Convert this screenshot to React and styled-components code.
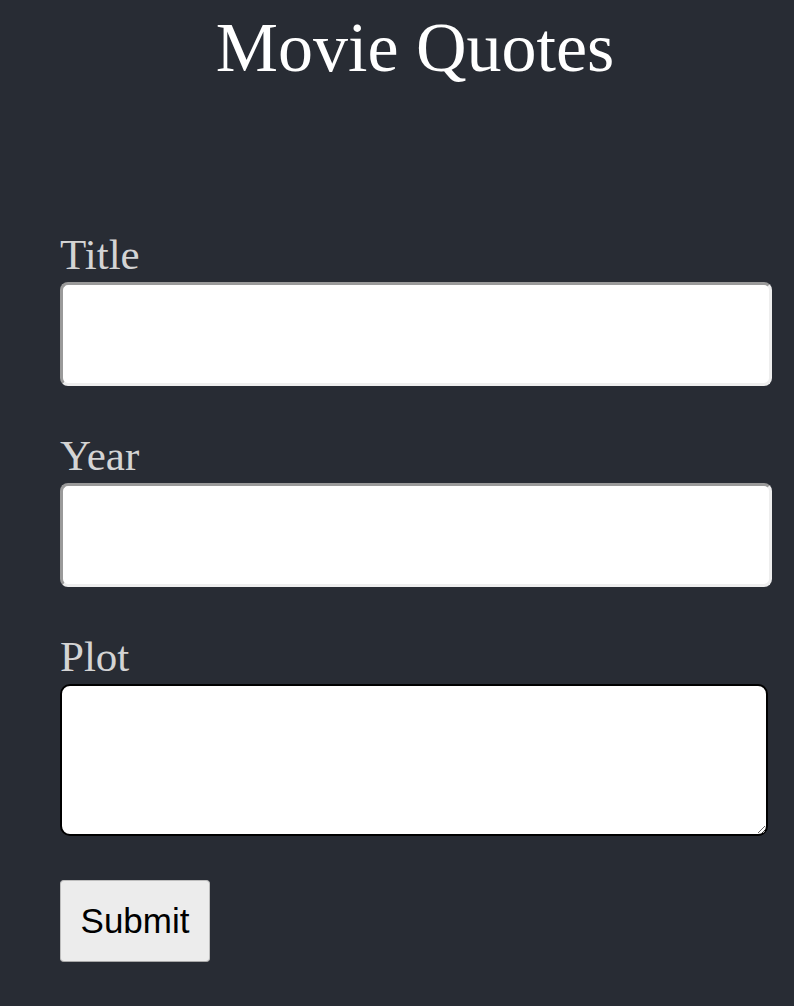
import React, { useState } from "react";
import styled, { createGlobalStyle } from "styled-components";

const GlobalStyle = createGlobalStyle`
  html, body {
    margin: 0;
    padding: 0;
    background-color: #282c34;
  }
`;

const App = () => {
  const [title, setTitle] = useState("");
  const [year, setYear] = useState("");
  const [plot, setPlot] = useState("");

  const handleSubmit = (e) => {
    e.preventDefault();
  };

  return (
    <Page>
      <GlobalStyle />
      <Heading>Movie Quotes</Heading>
      <QuoteForm onSubmit={handleSubmit}>
        <Field>
          <Label htmlFor="title">Title</Label>
          <TextInput
            id="title"
            type="text"
            value={title}
            onChange={(e) => setTitle(e.target.value)}
          />
        </Field>
        <Field>
          <Label htmlFor="year">Year</Label>
          <TextInput
            id="year"
            type="text"
            value={year}
            onChange={(e) => setYear(e.target.value)}
          />
        </Field>
        <Field>
          <Label htmlFor="plot">Plot</Label>
          <PlotArea
            id="plot"
            value={plot}
            onChange={(e) => setPlot(e.target.value)}
          />
        </Field>
        <SubmitButton type="submit">Submit</SubmitButton>
      </QuoteForm>
    </Page>
  );
};

const Page = styled.div`
  min-height: 1006px;
  background-color: #282c34;
  font-family: "Liberation Serif", "Times New Roman", serif;
  overflow: hidden;
`;

const Heading = styled.h1`
  margin: 13px 0 0 0;
  padding-left: 36px;
  font-size: 70px;
  font-weight: 400;
  line-height: 1;
  color: #ffffff;
  text-align: center;
`;

const QuoteForm = styled.form`
  display: flex;
  flex-direction: column;
  align-items: flex-start;
  gap: 48px;
  margin-top: 150px;
  padding: 0 22px 0 60px;
`;

const Field = styled.div`
  display: flex;
  flex-direction: column;
  gap: 6px;
  width: 100%;
`;

const Label = styled.label`
  font-size: 43px;
  line-height: 1;
  color: #d4d4d4;
`;

const TextInput = styled.input`
  box-sizing: border-box;
  width: 100%;
  height: 104px;
  padding: 0 12px;
  border-style: solid;
  border-width: 3px;
  border-color: #9a9a9a #eeeeee #eeeeee #9a9a9a;
  border-radius: 8px;
  background-color: #ffffff;
  font-size: 30px;
  outline: none;
`;

const PlotArea = styled.textarea`
  box-sizing: border-box;
  width: 708px;
  height: 152px;
  padding: 8px 12px;
  border: 2px solid #000000;
  border-radius: 10px;
  background-color: #ffffff;
  font-size: 24px;
  outline: none;
`;

const SubmitButton = styled.button`
  box-sizing: border-box;
  width: 150px;
  height: 82px;
  margin-top: -4px;
  padding: 0;
  border: 1px solid #bdbdbd;
  border-bottom-color: #a8a8a8;
  border-radius: 4px;
  background-color: #ececec;
  color: #000000;
  font-family: "Liberation Sans", Arial, sans-serif;
  font-size: 35px;
  cursor: pointer;
`;

export default App;
